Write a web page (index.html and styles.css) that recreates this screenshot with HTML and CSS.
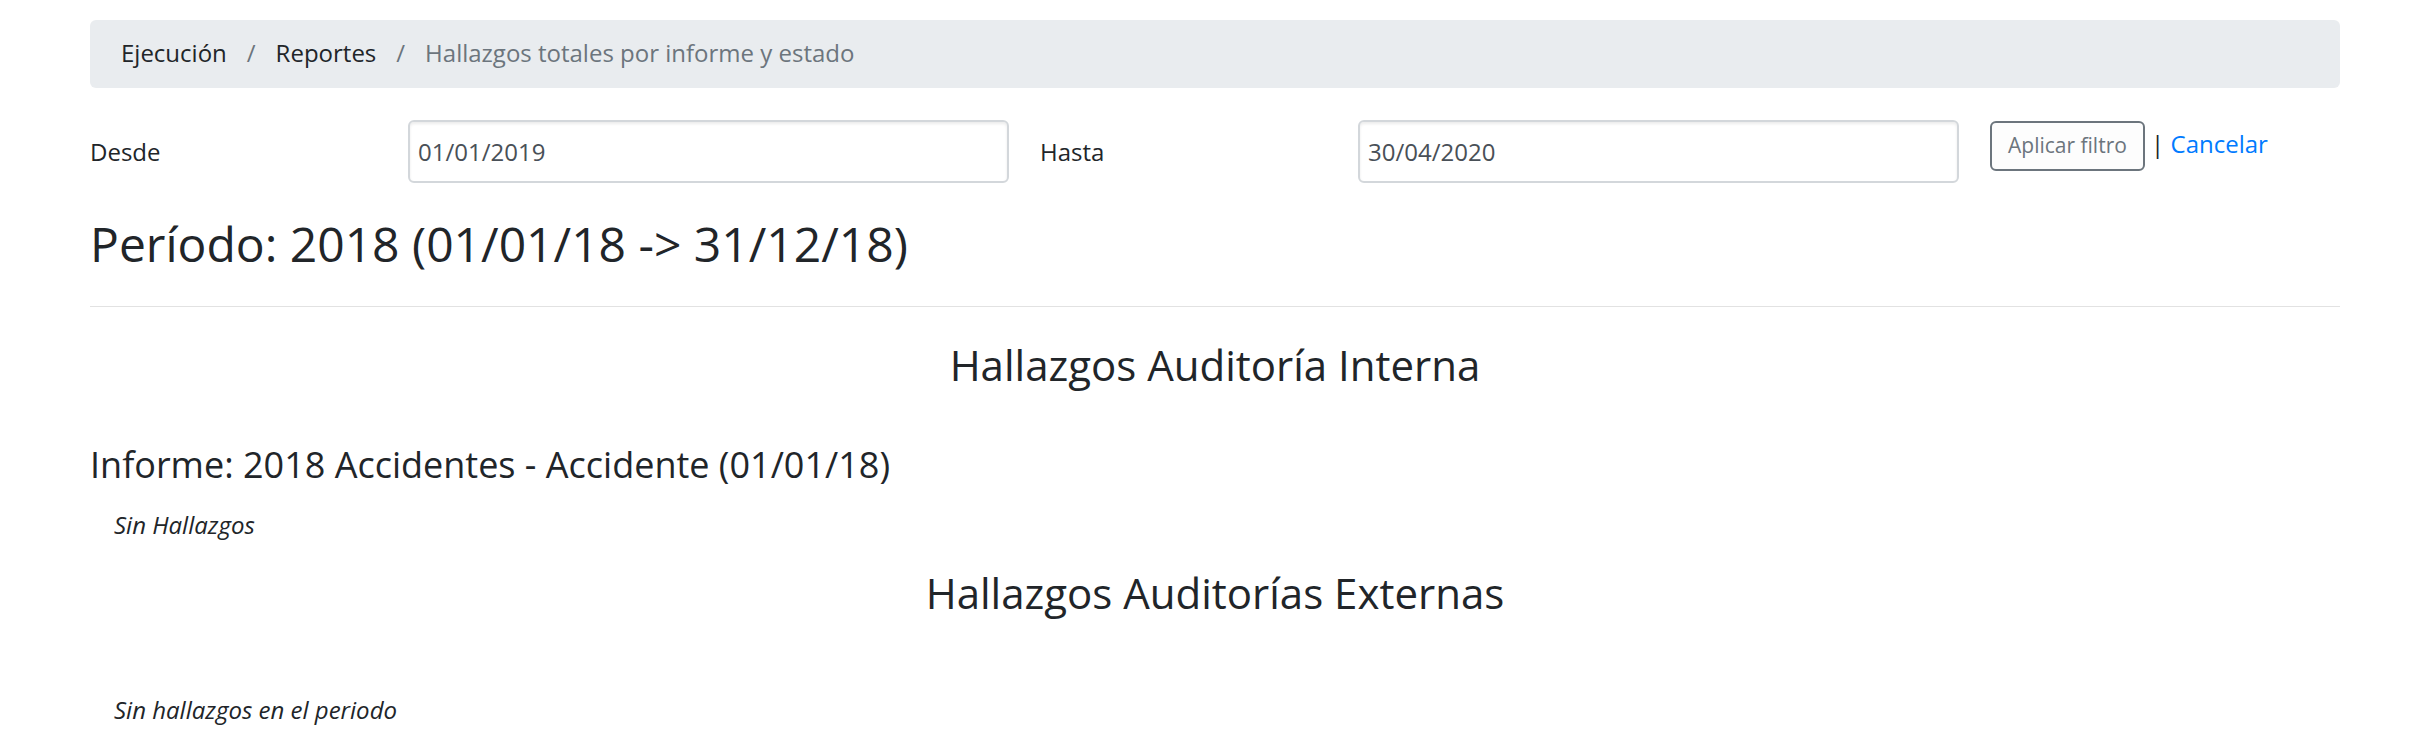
FILE: index.html
```html
<!DOCTYPE html>
<html lang="es">
<head>
<meta charset="utf-8">
<title>Hallazgos totales por informe y estado</title>
<link rel="stylesheet" href="styles.css">
</head>
<body>
<div class="container">
  <nav class="breadcrumb">
    <span class="crumb">Ejecución</span>
    <span class="sep">/</span>
    <span class="crumb">Reportes</span>
    <span class="sep">/</span>
    <span class="crumb active">Hallazgos totales por informe y estado</span>
  </nav>

  <form class="filter">
    <label class="label">Desde</label>
    <input class="field" type="text" value="01/01/2019">
    <label class="label">Hasta</label>
    <input class="field" type="text" value="30/04/2020">
    <div class="actions"><button type="button" class="btn">Aplicar filtro</button> | <a class="link" href="#">Cancelar</a></div>
  </form>

  <h2 class="period">Período: 2018 (01/01/18 -&gt; 31/12/18)</h2>
  <hr class="rule">

  <h3 class="section first">Hallazgos Auditoría Interna</h3>
  <h4 class="report">Informe: 2018 Accidentes - Accidente (01/01/18)</h4>
  <p class="note first-note">Sin Hallazgos</p>

  <h3 class="section second">Hallazgos Auditorías Externas</h3>
  <p class="note last-note">Sin hallazgos en el periodo</p>
</div>
</body>
</html>
```

FILE: styles.css
```css
html, body {
  margin: 0;
  padding: 0;
  background: #fff;
}

body {
  font-family: "Open Sans", "Noto Sans", sans-serif;
  font-size: 24px;
  line-height: 36px;
  color: #212529;
}

.container {
  padding: 0 90px;
}

.breadcrumb {
  margin-top: 20px;
  background: #e9ecef;
  border-radius: 6px;
  padding: 15px 31px 17px;
  display: flex;
  align-items: baseline;
  white-space: nowrap;
}

.crumb {
  color: #212529;
}

.crumb.active {
  color: #6c757d;
}

.sep {
  color: #6c757d;
  padding: 0 20px;
}

.filter {
  margin-top: 32px;
  display: grid;
  grid-template-columns: 287px 601px 287px 601px auto;
  column-gap: 31px;
  align-items: center;
}

.label {
  color: #212529;
}

.field {
  box-sizing: border-box;
  height: 63px;
  width: 601px;
  margin: 0;
  padding: 0 8px;
  border: 2px solid #d3d7db;
  border-radius: 6px;
  box-shadow: inset 0 2px 3px rgba(0, 0, 0, 0.08);
  font-family: "Open Sans", "Noto Sans", sans-serif;
  font-size: 24px;
  color: #495057;
  background: #fff;
}

.actions {
  align-self: start;
  padding-top: 1px;
  white-space: nowrap;
  color: #212529;
}

.btn {
  display: inline-block;
  font-family: "Open Sans", "Noto Sans", sans-serif;
  font-size: 21px;
  line-height: 31.5px;
  padding: 7px 16px;
  border: 2px solid #6c757d;
  border-radius: 6px;
  background: #fdfdfd;
  color: #6c757d;
  margin: 0;
}

.link {
  color: #007bff;
  text-decoration: none;
}

.period {
  margin: 32px 0 0;
  font-size: 48px;
  line-height: 57.6px;
  font-weight: 400;
}

.rule {
  margin: 33px 0 0;
  border: 0;
  border-top: 1.5px solid #e2e2e2;
  height: 0;
}

.section {
  text-align: center;
  font-size: 42px;
  line-height: 50.4px;
  font-weight: 400;
  margin: 0;
}

.section.first {
  margin-top: 33px;
}

.section.second {
  margin-top: 25px;
}

.report {
  margin: 53px 0 0;
  font-size: 36px;
  line-height: 43.2px;
  font-weight: 400;
}

.note {
  font-style: italic;
  margin: 0 0 0 24px;
}

.first-note {
  margin-top: 21px;
}

.last-note {
  margin-top: 73px;
}
```
